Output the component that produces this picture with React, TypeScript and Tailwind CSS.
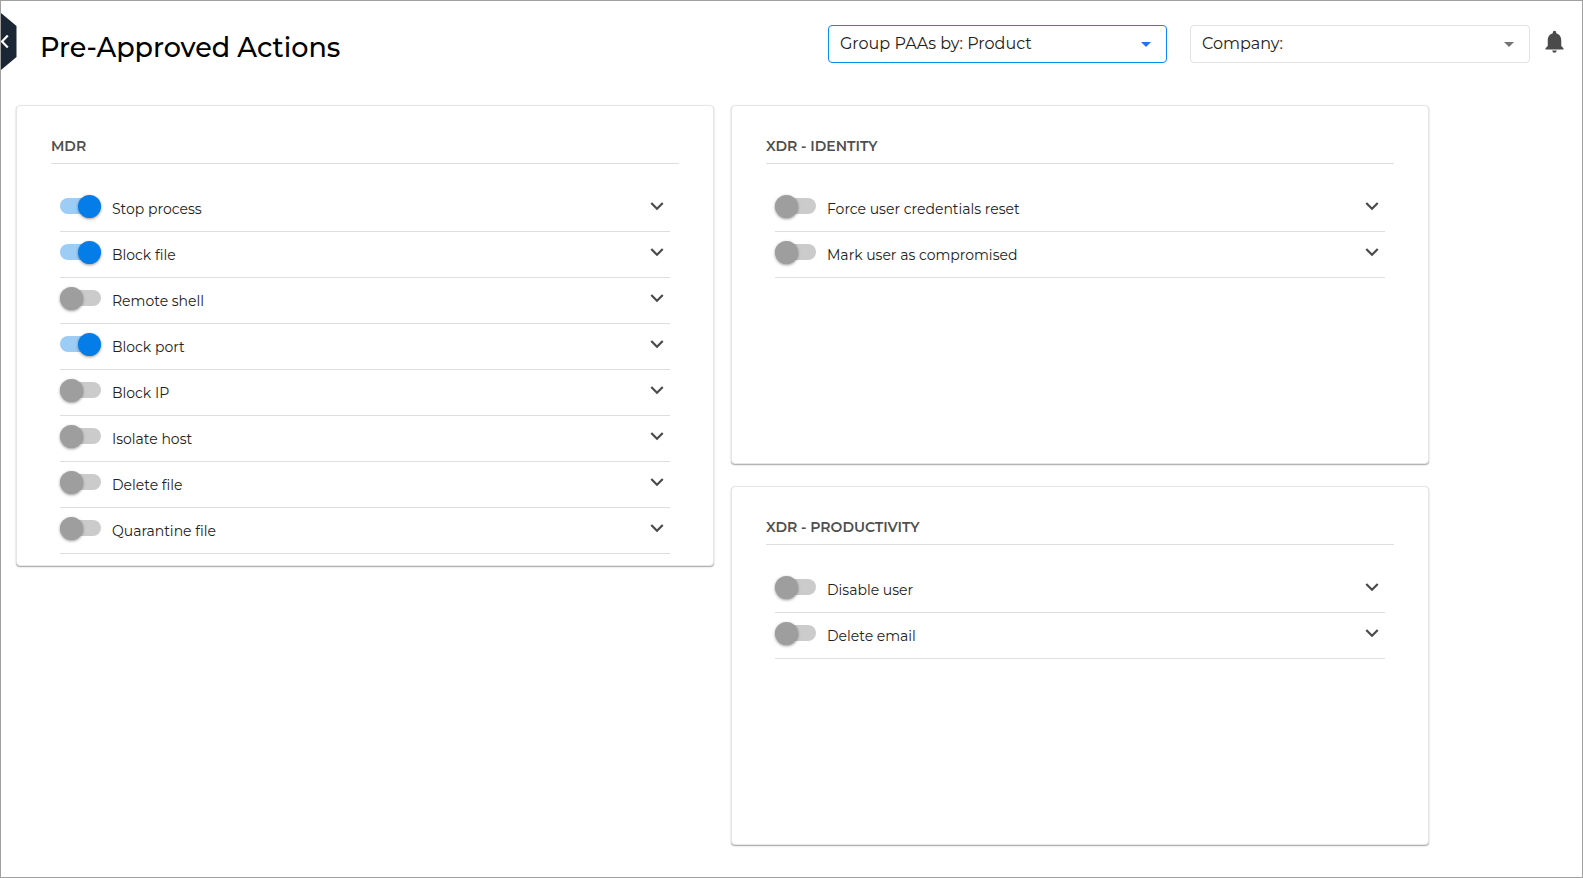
import { useState } from "react";
import { MdArrowDropDown, MdExpandMore, MdNotifications } from "react-icons/md";

type Action = {
  id: string;
  label: string;
  enabled: boolean;
};

type Product = {
  title: string;
  actions: Action[];
};

const mdr: Product = {
  title: "MDR",
  actions: [
    { id: "stop-process", label: "Stop process", enabled: true },
    { id: "block-file", label: "Block file", enabled: true },
    { id: "remote-shell", label: "Remote shell", enabled: false },
    { id: "block-port", label: "Block port", enabled: true },
    { id: "block-ip", label: "Block IP", enabled: false },
    { id: "isolate-host", label: "Isolate host", enabled: false },
    { id: "delete-file", label: "Delete file", enabled: false },
    { id: "quarantine-file", label: "Quarantine file", enabled: false },
  ],
};

const identity: Product = {
  title: "XDR - IDENTITY",
  actions: [
    { id: "force-reset", label: "Force user credentials reset", enabled: false },
    { id: "mark-compromised", label: "Mark user as compromised", enabled: false },
  ],
};

const productivity: Product = {
  title: "XDR - PRODUCTIVITY",
  actions: [
    { id: "disable-user", label: "Disable user", enabled: false },
    { id: "delete-email", label: "Delete email", enabled: false },
  ],
};

function ActionRow({ action }: { action: Action }) {
  const [enabled, setEnabled] = useState(action.enabled);

  return (
    <li className="flex h-[46px] items-start justify-between border-b border-[#dedede] pt-2">
      <label htmlFor={action.id} className="flex cursor-pointer items-start gap-[11px]">
        <span className="relative flex h-6 w-[41px] items-center">
          <input
            id={action.id}
            type="checkbox"
            role="switch"
            checked={enabled}
            onChange={(e) => setEnabled(e.target.checked)}
            className="peer sr-only"
          />
          <span className="h-4 w-full rounded-full bg-[#cbcbcb] peer-checked:bg-[#9dcdf5]" />
          <span className="absolute left-0 size-[23px] rounded-full bg-[#9e9e9e] shadow-[0_1px_3px_rgba(0,0,0,0.4)] transition-transform peer-checked:translate-x-[18px] peer-checked:bg-[#047de8]" />
        </span>
        <span className="pt-[3px] text-sm leading-6 text-[#212121]">{action.label}</span>
      </label>
      <button
        type="button"
        aria-label={`Show details for ${action.label}`}
        className="flex h-6 items-center text-[#4a4a4a]"
      >
        <MdExpandMore size={26} />
      </button>
    </li>
  );
}

function ProductCard({ product }: { product: Product }) {
  return (
    <section className="min-h-[359px] rounded border border-[#e6e6e6] bg-white px-[34px] pt-7 pb-[11px] shadow-[0_1px_1px_rgba(0,0,0,0.28),0_1px_3px_rgba(0,0,0,0.1)]">
      <h2 className="border-b border-[#dedede] pt-0.5 pb-[7px] text-sm leading-5 font-semibold text-[#4f4f4f]">
        {product.title}
      </h2>
      <ul className="mx-[9px] pt-[22px]">
        {product.actions.map((action) => (
          <ActionRow key={action.id} action={action} />
        ))}
      </ul>
    </section>
  );
}

export default function App() {
  return (
    <div className="relative min-h-screen border border-[#a0a0a0] bg-white font-['Montserrat','Inter',sans-serif]">
      <button type="button" aria-label="Expand menu" className="absolute top-3 left-0">
        <svg width="16" height="57" viewBox="0 0 16 57" fill="none">
          <path d="M0 0L15.5 13V44L0 57Z" fill="#1c2735" />
          <path d="M6.8 22.5L1 28.5L6.8 34.5" stroke="#fff" strokeWidth="2.2" />
        </svg>
      </button>

      <header className="flex items-start pt-6 pr-[14px] pl-[39px]">
        <h1 className="flex-1 text-[27px] leading-[46px] font-medium text-black">Pre-Approved Actions</h1>

        <div className="relative mr-[23px] w-[339px]">
          <select
            aria-label="Group PAAs by"
            defaultValue="product"
            className="h-[38px] w-full appearance-none rounded border border-[#0a8bee] bg-white pl-[11px] text-base text-[#212121]"
          >
            <option value="product">Group PAAs by: Product</option>
            <option value="company">Group PAAs by: Company</option>
          </select>
          <MdArrowDropDown size={24} className="pointer-events-none absolute top-[7px] right-[9px] text-[#2f6df6]" />
        </div>

        <div className="relative mr-[11px] w-[340px]">
          <select
            aria-label="Company"
            className="h-[38px] w-full appearance-none rounded border border-[#e2e2e2] bg-white pl-[11px] text-base text-[#212121]"
          >
            <option>Company:</option>
          </select>
          <MdArrowDropDown size={24} className="pointer-events-none absolute top-[7px] right-[9px] text-[#757575]" />
        </div>

        <button type="button" aria-label="Notifications" className="pt-[3px] text-[#4a4a4a]">
          <MdNotifications size={27} />
        </button>
      </header>

      <main className="grid grid-cols-2 items-start gap-[17px] pt-[34px] pr-[153px] pb-8 pl-[15px]">
        <ProductCard product={mdr} />
        <div className="flex flex-col gap-[22px]">
          <ProductCard product={identity} />
          <ProductCard product={productivity} />
        </div>
      </main>
    </div>
  );
}
